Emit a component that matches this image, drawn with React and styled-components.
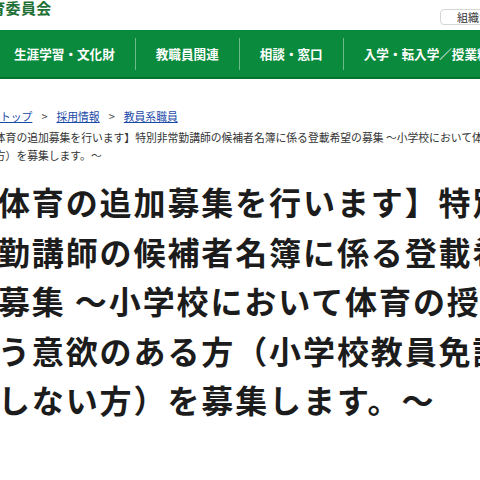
import React from 'react';
import styled, { createGlobalStyle } from 'styled-components';

const GlobalStyle = createGlobalStyle`
  html, body {
    margin: 0;
    padding: 0;
    background: #fff;
    overflow: hidden;
  }
  body {
    width: 480px;
    font-family: "Noto Sans CJK JP", "Noto Sans", sans-serif;
    color: #222;
  }
`;

const navItems = ['生涯学習・文化財', '教職員関連', '相談・窓口', '入学・転入学／授業料'];

const crumbs = ['教育委員会トップ', '採用情報', '教員系職員'];

const titleLines = [
  '【体育の追加募集を行います】特別非',
  '常勤講師の候補者名簿に係る登載希望',
  'の募集 〜小学校において体育の授業を',
  '行う意欲のある方（小学校教員免許状を',
  '有しない方）を募集します。〜',
];

const App = () => {
  return (
    <Page>
      <GlobalStyle />
      <Header>
        <SiteTitle>教育委員会</SiteTitle>
        <OrgButton>組織から探す</OrgButton>
      </Header>
      <Nav>
        <NavList>
          {navItems.map(item => (
            <NavItem key={item}>{item}</NavItem>
          ))}
        </NavList>
      </Nav>
      <Breadcrumb>
        {crumbs.map((c, i) => (
          <React.Fragment key={c}>
            {i > 0 && <CrumbSep>&gt;</CrumbSep>}
            <CrumbLink href="#">{c}</CrumbLink>
          </React.Fragment>
        ))}
      </Breadcrumb>
      <Current>
        【体育の追加募集を行います】特別非常勤講師の候補者名簿に係る登載希望の募集 〜小学校において体育の授業を行う意欲のある方（小学校教員免許状を有しない方）を募集します。〜
      </Current>
      <Title>
        {titleLines.map((line, i) => (
          <React.Fragment key={i}>
            {i > 0 && <br />}
            {line}
          </React.Fragment>
        ))}
      </Title>
    </Page>
  );
};

const Page = styled.div`
  width: 480px;
  height: 480px;
  overflow: hidden;
`;

const Header = styled.header`
  height: 30px;
  display: flex;
  justify-content: space-between;
  align-items: flex-start;
`;

const SiteTitle = styled.div`
  margin-left: -25px;
  font-size: 15px;
  line-height: 15px;
  font-weight: 700;
  color: #1f7034;
  letter-spacing: 0.3px;
`;

const OrgButton = styled.button`
  margin-top: 9px;
  margin-right: -60px;
  height: 16px;
  padding: 0 16px;
  border: 1px solid #d6d6d6;
  border-radius: 4px;
  background: #fff;
  font-family: inherit;
  font-size: 11px;
  line-height: 14px;
  color: #333;
  white-space: nowrap;
`;

const Nav = styled.nav`
  height: 47px;
  background: #0a8a3c;
  border-bottom: 2px solid #06742f;
  overflow: hidden;
`;

const NavList = styled.ul`
  list-style: none;
  margin: 0 0 0 -6px;
  padding: 0;
  height: 100%;
  display: flex;
  align-items: center;
  white-space: nowrap;
`;

const NavItem = styled.li`
  height: 32px;
  padding: 0 20px;
  display: flex;
  align-items: center;
  font-size: 12.6px;
  font-weight: 700;
  color: #fff;

  & + & {
    border-left: 1px solid rgba(255, 255, 255, 0.4);
  }
`;

const Breadcrumb = styled.div`
  margin: 29px 0 0 -54px;
  display: flex;
  align-items: center;
  gap: 9px;
  font-size: 10.8px;
  line-height: 16px;
  white-space: nowrap;
`;

const CrumbLink = styled.a`
  color: #1a4aa8;
  text-decoration: underline;
`;

const CrumbSep = styled.span`
  color: #444;
  font-size: 11px;
`;

const Current = styled.p`
  margin: 4px 0 0 -16px;
  width: 785px;
  font-size: 10.8px;
  line-height: 18px;
  color: #333;
`;

const Title = styled.h1`
  margin: 13px 0 0 -36px;
  font-size: 32px;
  line-height: 49.5px;
  letter-spacing: 1.9px;
  font-weight: 700;
  color: #1c1c1c;
  white-space: nowrap;
`;

export default App;
